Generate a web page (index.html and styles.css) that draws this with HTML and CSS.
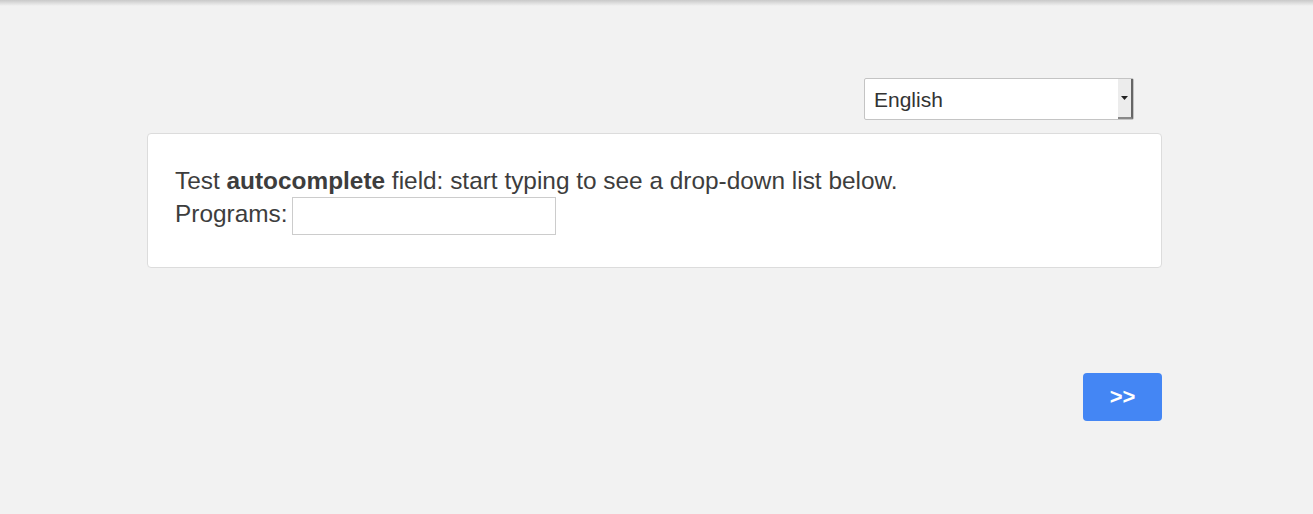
FILE: index.html
```html
<!DOCTYPE html>
<html>
<head>
<meta charset="utf-8">
<link rel="stylesheet" href="styles.css">
</head>
<body>
<div class="topshade"></div>
<div class="page">
  <div class="langrow">
    <div class="selectwrap">
      <select class="lang">
        <option>English</option>
      </select>
      <span class="grip"><svg width="7" height="4" viewBox="0 0 7 4"><path d="M0 0H7L3.5 4Z" fill="#222"/></svg></span>
    </div>
  </div>
  <div class="card">
    <div class="line">Test <b>autocomplete</b> field: start typing to see a drop-down list below.</div>
    <div class="line">Programs: <input class="prog" type="text"></div>
  </div>
  <div class="btnrow">
    <button class="next">&gt;&gt;</button>
  </div>
</div>
</body>
</html>
```
FILE: styles.css
```css
html, body {
  margin: 0;
  padding: 0;
  background: #f2f2f2;
  font-family: "Liberation Sans", Arial, sans-serif;
  color: #3d3d3d;
}
.topshade {
  height: 6px;
  background: linear-gradient(#c9c9c9, #f2f2f2);
}
.page {
  width: 1015px;
  margin-left: 147px;
  padding-top: 72px;
}
.langrow {
  display: flex;
  justify-content: flex-end;
  padding-right: 28px;
}
.selectwrap {
  position: relative;
  width: 270px;
  height: 42px;
}
.lang {
  appearance: none;
  -webkit-appearance: none;
  box-sizing: border-box;
  width: 100%;
  height: 100%;
  border: 1px solid #c4c4c4;
  border-radius: 2px;
  background: #fff;
  font-family: "Liberation Sans", Arial, sans-serif;
  font-size: 21px;
  color: #333;
  padding: 0 0 0 9px;
  margin: 0;
}
.grip {
  position: absolute;
  right: 1px;
  top: 1px;
  bottom: 1px;
  width: 15px;
  background: #ececec;
  border-right: 2px solid #666;
  border-bottom: 2px solid #888;
  box-sizing: border-box;
  display: flex;
  align-items: center;
  justify-content: center;
  pointer-events: none;
}
.card {
  margin-top: 13px;
  background: #fff;
  border: 1px solid #dcdcdc;
  border-radius: 4px;
  padding: 30px 27px 32px;
  font-size: 24.4px;
  line-height: 33px;
}
.line b {
  font-weight: bold;
}
.prog {
  box-sizing: border-box;
  width: 264px;
  height: 38px;
  border: 1px solid #cccccc;
  margin: 0 0 0 -2px;
  padding: 0 6px;
  font-size: 18px;
  vertical-align: middle;
  background: #fff;
}
.btnrow {
  display: flex;
  justify-content: flex-end;
  margin-top: 105px;
}
.next {
  width: 79px;
  height: 48px;
  border: none;
  border-radius: 4px;
  background: #4486f4;
  color: #fff;
  font-family: "Liberation Sans", Arial, sans-serif;
  font-weight: bold;
  font-size: 22px;
  padding: 0;
}
```
